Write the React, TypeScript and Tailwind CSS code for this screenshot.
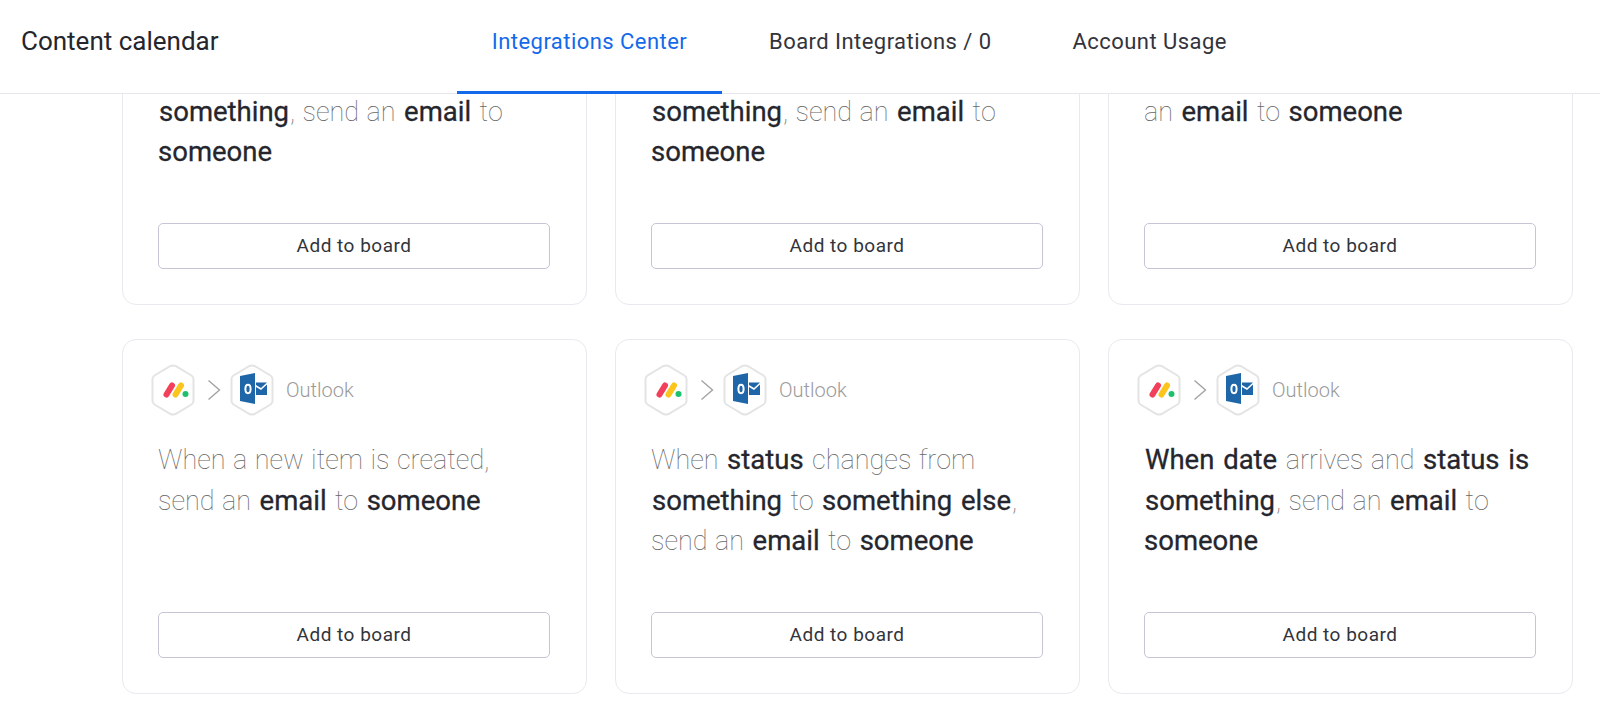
import React from 'react';

const Hex = ({ children }: { children: React.ReactNode }) => (
  <svg width="44" height="52" viewBox="0 0 44 52" fill="none">
    <path d="M19.5 2 Q22 0.8 24.5 2 L40.5 11.5 Q42.5 12.8 42.5 15 V37 Q42.5 39.2 40.5 40.5 L24.5 50 Q22 51.2 19.5 50 L3.5 40.5 Q1.5 39.2 1.5 37 V15 Q1.5 12.8 3.5 11.5 Z" fill="#fff" stroke="#e4e4e4" strokeWidth="2" />
    {children}
  </svg>
);

const MondayHex = () => (
  <Hex>
    <path d="M15.5 30.5 L21 21.5" stroke="#f2405b" strokeWidth="6" strokeLinecap="round" />
    <path d="M24.5 30.5 L30 21.5" stroke="#fbc51c" strokeWidth="6" strokeLinecap="round" />
    <circle cx="34.5" cy="30" r="3" fill="#1ec16b" />
  </Hex>
);

const OutlookHex = () => (
  <Hex>
    <path d="M10 12 L25 9 V40 L10 37 Z" fill="#1f66a8" />
    <ellipse cx="18" cy="25" rx="2.6" ry="4.2" fill="none" stroke="#fff" strokeWidth="2" />
    <path d="M26 18.5 H37 L31 24 L26 21 Z" fill="#1f66a8" />
    <path d="M26 23 L31 26 L37 20.5 V31 H26 Z" fill="#1f66a8" />
  </Hex>
);

// bold words sit a little apart from the light text around them
const B = ({ children }: { children: React.ReactNode }) => (
  <span className="mx-[1px] text-[27.5px] font-normal text-[#25262d] [word-spacing:2px] [-webkit-text-stroke:0.3px_#25262d]">{children}</span>
);

// same, for a word that starts a line
const Flush = ({ children }: { children: React.ReactNode }) => (
  <span className="text-[27.5px] font-normal text-[#25262d] [-webkit-text-stroke:0.3px_#25262d]">{children}</span>
);

const Card = ({ children }: { children: React.ReactNode }) => (
  <div className="flex h-[355px] flex-col rounded-[14px] border border-[#e9e9f0] bg-white pt-[24px] pr-[35.5px] pb-[35px] pl-[35px]">
    <div className="ml-[-7px] flex items-center">
      <MondayHex />
      <svg className="mr-[9px] ml-[12px]" width="14" height="22" viewBox="0 0 14 22" fill="none">
        <path d="M1.5 1.5 L12.5 11 L1.5 20.5" stroke="#a3a3a3" strokeWidth="1.4" />
      </svg>
      <OutlookHex />
      <span className="ml-[12px] text-[20px] font-light text-[#9a9a9a]">Outlook</span>
    </div>
    <p className="mt-[24px] text-[27px] leading-[40.5px] font-thin text-[#666] [word-spacing:1px]">{children}</p>
    <button className="mt-auto h-[46px] w-full shrink-0 rounded-[5px] border border-[#c5c5d5] bg-white text-[19px] tracking-[0.5px] text-[#33343b]">
      Add to board
    </button>
  </div>
);

const dateStatus = (
  <>
    <B>When date</B> arrives and <B>status is</B> <B>something</B>, send an <B>email</B> to <br />
    <Flush>someone</Flush>
  </>
);

export default function App() {
  return (
    <div className="relative h-screen overflow-hidden bg-white font-['Roboto',sans-serif]">
      <header className="relative z-10 flex h-[94px] items-center border-b border-[#e6e6ec] bg-white pb-[12px]">
        <div className="w-[457px] pt-[2px] pl-[21px] text-[26px] text-[#25262d]">Content calendar</div>
        <nav className="flex h-full text-[22px] tracking-[0.45px] text-[#33343b]">
          <a className="mb-[-12px] flex h-[94px] w-[265px] items-center justify-center border-b-[3px] border-[#1469ea] pb-[9px] text-[#1469ea]">
            Integrations Center
          </a>
          <a className="ml-[47px] flex h-[82px] items-center">Board Integrations / 0</a>
          <a className="ml-[81px] flex h-[82px] items-center">Account Usage</a>
        </nav>
      </header>
      <main className="mt-[-144px] grid grid-cols-[464.5px_464.5px_464.5px] gap-x-[28.5px] gap-y-[34px] pl-[122px]">
        <Card>{dateStatus}</Card>
        <Card>{dateStatus}</Card>
        <Card>
          <B>When date</B> arrives, send <br />
          an <B>email</B> to <B>someone</B>
        </Card>
        <Card>
          When a new item is created, <br />
          send an <B>email</B> to <B>someone</B>
        </Card>
        <Card>
          When <B>status</B> changes from <br />
          <B>something</B> to <B>something else</B>, <br />
          send an <B>email</B> to <B>someone</B>
        </Card>
        <Card>{dateStatus}</Card>
      </main>
    </div>
  );
}
